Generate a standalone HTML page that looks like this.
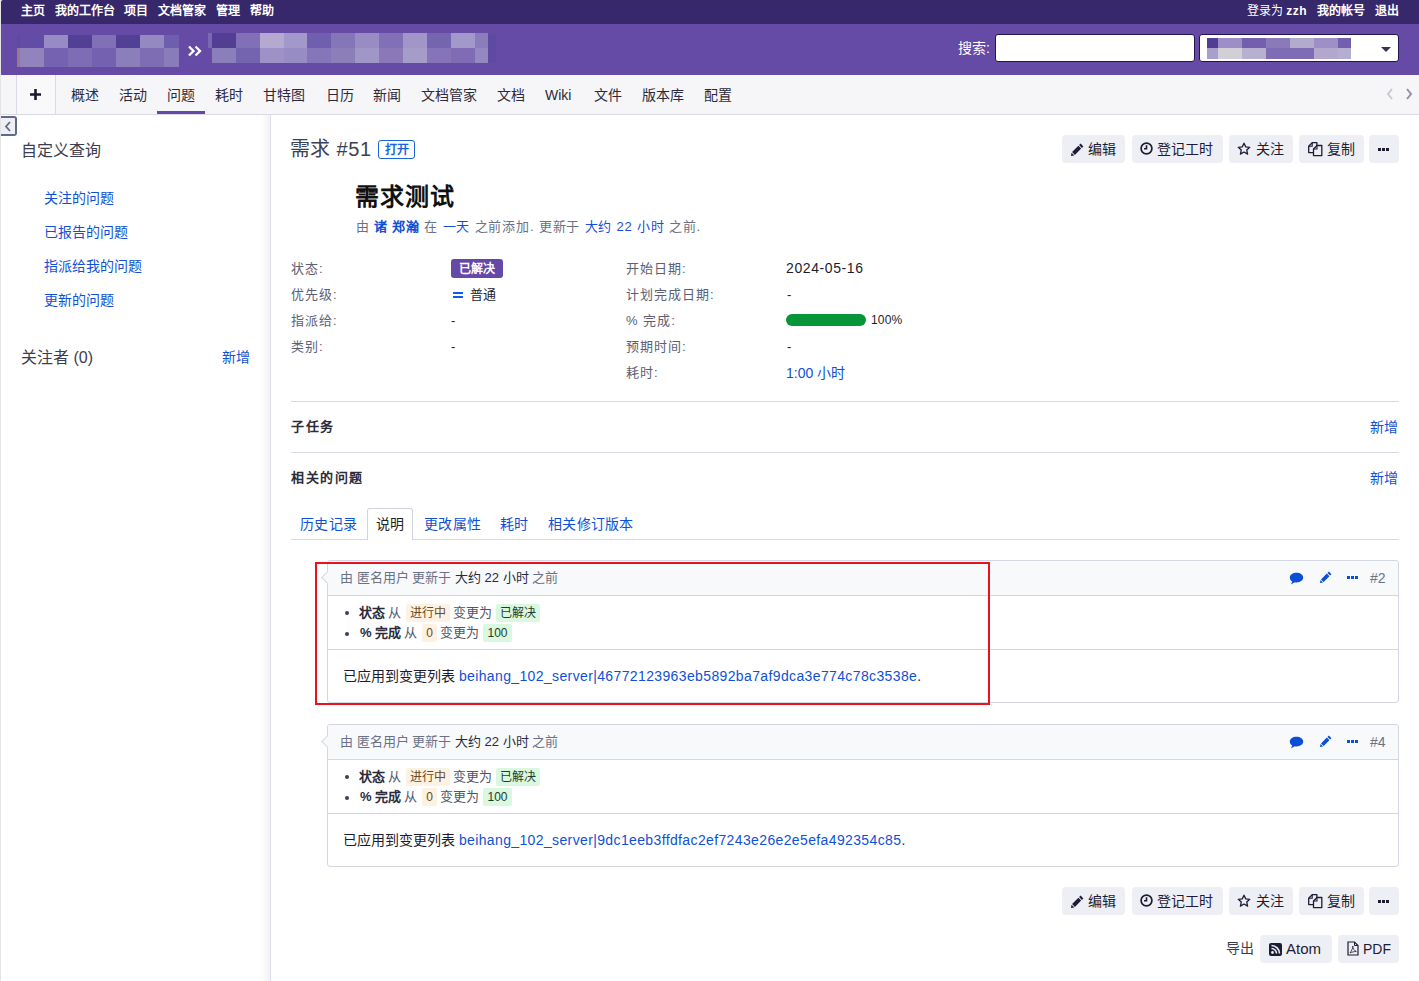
<!DOCTYPE html>
<html lang="zh-CN">
<head>
<meta charset="utf-8">
<style>
*{box-sizing:border-box;margin:0;padding:0}
html,body{width:1419px;height:981px;overflow:hidden;background:#fff}
body{font-family:"Liberation Sans",sans-serif;color:#1d1c2e;position:relative;font-size:13px}
.a{position:absolute;white-space:nowrap}
i{font-style:normal}
#leftedge{position:absolute;left:0;top:0;width:1px;height:981px;background:#e4e4e6;z-index:50}
#top{position:absolute;left:1px;top:0;width:1418px;height:24px;background:#37276b;border-top-left-radius:2px}
#top .a{color:#fff;font-size:12px;font-weight:bold;top:3px;line-height:16px}
#header{position:absolute;left:1px;top:24px;width:1418px;height:51px;background:#654aa6}
.mz{position:absolute}
.mz i{position:absolute;display:block}
#tabs{position:absolute;left:1px;top:75px;width:1418px;height:40px;background:#f6f6f9;border-bottom:1px solid #d9dae5}
#tabs .t{position:absolute;top:10px;font-size:14px;line-height:20px;color:#2b2a3d}
#sidebar{position:absolute;left:1px;top:115px;width:270px;height:866px;background:#fff;border-right:1px solid #dcdde8}
#sidebar:after{content:"";position:absolute;right:0;top:0;width:9px;height:100%;background:linear-gradient(to right,rgba(244,244,246,0),rgba(242,242,244,1))}
.lnk{color:#1150d6}
.btn{position:absolute;height:28px;background:#eeeff4;border-radius:4px;font-size:14px;line-height:28px;color:#1d1c35}
.lbl{position:absolute;color:#5b6074;font-size:13px;line-height:18px;letter-spacing:1px}
.val{position:absolute;color:#1d1c2e;font-size:13px;line-height:18px}
.hr{position:absolute;left:291px;width:1108px;height:1px;background:#d7d9e5}
.jr{position:absolute;left:327px;width:1072px;border:1px solid #d4d6e3;border-radius:3px;background:#fff}
.jh{position:absolute;left:0;top:0;right:0;height:35px;background:#f8f9fb;border-bottom:1px solid #d4d6e3;border-radius:3px 3px 0 0}
.arrow{position:absolute;left:-5px;top:11.5px;width:9px;height:9px;transform:rotate(45deg);background:#f8f9fb;border-left:1px solid #d4d6e3;border-bottom:1px solid #d4d6e3}
.gray{color:#6b7186}
.det{font-size:13px;line-height:18px;color:#2a2a3a}
.dg{color:#50556a}
.chg-o{background:#fdf1e3;border-radius:2px;text-align:center;font-size:12px;color:#6a4a22}
.chg-g{background:#daf7e0;border-radius:2px;text-align:center;font-size:12px;color:#1f3d26}
.bul{position:absolute;left:345px;width:4px;height:4px;border-radius:50%;background:#3c4054}
</style>
</head>
<body>
<div id="leftedge"></div>
<div id="top">
  <span class="a" style="left:20px">主页</span>
  <span class="a" style="left:54px">我的工作台</span>
  <span class="a" style="left:123px">项目</span>
  <span class="a" style="left:157px">文档管家</span>
  <span class="a" style="left:215px">管理</span>
  <span class="a" style="left:249px">帮助</span>
  <span class="a" style="left:1246px;font-weight:normal">登录为 <b style="letter-spacing:.5px">zzh</b></span>
  <span class="a" style="left:1316px">我的帐号</span>
  <span class="a" style="left:1374px">退出</span>
</div>
<div id="header"></div>
<div class="mz" style="left:0;top:0"><i style="left:17px;top:35px;width:3px;height:13px;background:#5e4aa5"></i><i style="left:20px;top:35px;width:24px;height:13px;background:#614ca6"></i><i style="left:44px;top:35px;width:24px;height:13px;background:#988ac4"></i><i style="left:68px;top:35px;width:24px;height:13px;background:#523f96"></i><i style="left:92px;top:35px;width:24px;height:13px;background:#8170b6"></i><i style="left:116px;top:35px;width:24px;height:13px;background:#523f96"></i><i style="left:140px;top:35px;width:24px;height:13px;background:#9589c1"></i><i style="left:164px;top:35px;width:15px;height:13px;background:#6f5eae"></i><i style="left:17px;top:48px;width:3px;height:19px;background:#9a7a8a"></i><i style="left:20px;top:48px;width:24px;height:19px;background:#9183be"></i><i style="left:44px;top:48px;width:24px;height:19px;background:#7563b1"></i><i style="left:68px;top:48px;width:24px;height:19px;background:#7e6db4"></i><i style="left:92px;top:48px;width:24px;height:19px;background:#7461b0"></i><i style="left:116px;top:48px;width:24px;height:19px;background:#8b7fbb"></i><i style="left:140px;top:48px;width:24px;height:19px;background:#7e6db4"></i><i style="left:164px;top:48px;width:15px;height:19px;background:#887cba"></i><i style="left:208px;top:33px;width:4px;height:15px;background:#7a68b2"></i><i style="left:212px;top:33px;width:24px;height:15px;background:#523f94"></i><i style="left:236px;top:33px;width:24px;height:15px;background:#8170b6"></i><i style="left:260px;top:33px;width:24px;height:15px;background:#b5a9d1"></i><i style="left:284px;top:33px;width:23px;height:15px;background:#a398ca"></i><i style="left:307px;top:33px;width:24px;height:15px;background:#705eae"></i><i style="left:331px;top:33px;width:24px;height:15px;background:#8576b8"></i><i style="left:355px;top:33px;width:24px;height:15px;background:#998cc3"></i><i style="left:379px;top:33px;width:24px;height:15px;background:#8170b6"></i><i style="left:403px;top:33px;width:24px;height:15px;background:#a296c8"></i><i style="left:427px;top:33px;width:24px;height:15px;background:#7565af"></i><i style="left:451px;top:33px;width:24px;height:15px;background:#a398ca"></i><i style="left:475px;top:33px;width:13px;height:15px;background:#8b7db9"></i><i style="left:212px;top:48px;width:24px;height:15px;background:#8a7fbb"></i><i style="left:236px;top:48px;width:24px;height:15px;background:#7463ae"></i><i style="left:260px;top:48px;width:24px;height:15px;background:#9e91c5"></i><i style="left:284px;top:48px;width:23px;height:15px;background:#978cc4"></i><i style="left:307px;top:48px;width:24px;height:15px;background:#8476b8"></i><i style="left:331px;top:48px;width:24px;height:15px;background:#8c7eb9"></i><i style="left:355px;top:48px;width:24px;height:15px;background:#a096c8"></i><i style="left:379px;top:48px;width:24px;height:15px;background:#8a78b8"></i><i style="left:403px;top:48px;width:24px;height:15px;background:#a69cca"></i><i style="left:427px;top:48px;width:24px;height:15px;background:#8575b8"></i><i style="left:451px;top:48px;width:24px;height:15px;background:#7f6cb4"></i><i style="left:475px;top:48px;width:13px;height:15px;background:#9587c0"></i><i style="left:488px;top:34px;width:8px;height:29px;background:#5e4ba1"></i></div>
<svg style="position:absolute;left:187px;top:45px" width="15" height="12" viewBox="0 0 15 12"><path d="M2 1.5l4.5 4.5L2 10.5M8.5 1.5L13 6l-4.5 4.5" fill="none" stroke="#fff" stroke-width="2.3"/></svg>
<span class="a" style="left:958px;top:38px;color:#fff;font-size:14px;line-height:20px">搜索:</span>
<div style="position:absolute;left:995px;top:34px;width:200px;height:28px;background:#fff;border:1px solid #21164a;border-radius:3px"></div>
<div style="position:absolute;left:1199px;top:34px;width:200px;height:28px;background:#fff;border:1px solid #21164a;border-radius:3px"></div>
<div class="mz" style="left:0;top:0"><i style="left:1207px;top:38px;width:11px;height:10px;background:#523d96"></i><i style="left:1218px;top:38px;width:24px;height:10px;background:#9d8fc6"></i><i style="left:1242px;top:38px;width:24px;height:10px;background:#735fae"></i><i style="left:1266px;top:38px;width:24px;height:10px;background:#8a7bb8"></i><i style="left:1290px;top:38px;width:24px;height:10px;background:#b3abcb"></i><i style="left:1314px;top:38px;width:24px;height:10px;background:#9e90c6"></i><i style="left:1338px;top:38px;width:13px;height:10px;background:#735fae"></i><i style="left:1207px;top:48px;width:11px;height:11px;background:#a99fcc"></i><i style="left:1218px;top:48px;width:24px;height:11px;background:#d2d0d6"></i><i style="left:1242px;top:48px;width:24px;height:11px;background:#b7b0d0"></i><i style="left:1266px;top:48px;width:24px;height:11px;background:#7e6cb4"></i><i style="left:1290px;top:48px;width:24px;height:11px;background:#7e6cb4"></i><i style="left:1314px;top:48px;width:24px;height:11px;background:#b2a8ce"></i><i style="left:1338px;top:48px;width:13px;height:11px;background:#b6aed0"></i></div>
<div style="position:absolute;left:1381px;top:47px;width:0;height:0;border-left:5px solid transparent;border-right:5px solid transparent;border-top:5px solid #363452"></div>
<div id="tabs">
<div style="position:absolute;left:15px;top:0;width:40px;height:39px;background:#f9f9fb;border-left:1px solid #d9dae5;border-right:1px solid #d9dae5"></div>
<svg style="position:absolute;left:28px;top:13px" width="13" height="13" viewBox="0 0 13 13"><path d="M6.5 1v11M1 6.5h11" stroke="#1a1a2e" stroke-width="2.6"/></svg>
<span class="t" style="left:70px">概述</span>
<span class="t" style="left:118px">活动</span>
<span class="t" style="left:166px">问题</span>
<span class="t" style="left:214px">耗时</span>
<span class="t" style="left:262px">甘特图</span>
<span class="t" style="left:325px">日历</span>
<span class="t" style="left:372px">新闻</span>
<span class="t" style="left:420px">文档管家</span>
<span class="t" style="left:496px">文档</span>
<span class="t" style="left:544px">Wiki</span>
<span class="t" style="left:593px">文件</span>
<span class="t" style="left:641px">版本库</span>
<span class="t" style="left:703px">配置</span>
<div style="position:absolute;left:156px;top:36px;width:48px;height:3px;background:#6549a6"></div>
<svg style="position:absolute;left:1384px;top:12px" width="10" height="14" viewBox="0 0 10 14"><path d="M7 2L3 7l4 5" fill="none" stroke="#c6c9d6" stroke-width="2"/></svg>
<svg style="position:absolute;left:1403px;top:12px" width="10" height="14" viewBox="0 0 10 14"><path d="M3 2l4 5-4 5" fill="none" stroke="#8d92a8" stroke-width="2"/></svg>
</div>
<div id="sidebar">
  <div style="position:absolute;left:0;top:1px;width:16px;height:20px;background:#eeeff4;border:2px solid #5f6a89;border-left:none;border-radius:0 3px 3px 0"></div>
  <svg style="position:absolute;left:3px;top:6px" width="8" height="11" viewBox="0 0 8 11"><path d="M6 1L2 5.5 6 10" fill="none" stroke="#5f6a89" stroke-width="1.8"/></svg>
  <span class="a" style="left:20px;top:25px;font-size:16px;line-height:22px;color:#3b3e50">自定义查询</span>
  <span class="a lnk" style="left:43px;top:73px;font-size:14px;line-height:20px">关注的问题</span>
  <span class="a lnk" style="left:43px;top:107px;font-size:14px;line-height:20px">已报告的问题</span>
  <span class="a lnk" style="left:43px;top:141px;font-size:14px;line-height:20px">指派给我的问题</span>
  <span class="a lnk" style="left:43px;top:175px;font-size:14px;line-height:20px">更新的问题</span>
  <span class="a" style="left:20px;top:232px;font-size:16px;line-height:22px;color:#3b3e50">关注者 (0)</span>
  <span class="a lnk" style="left:221px;top:232px;font-size:14px;line-height:20px">新增</span>
</div>

<span class="a" style="left:290px;top:136px;font-size:20px;line-height:26px;color:#3e4153">需求 <span style="margin-left:1px;letter-spacing:.6px">#51</span></span>
<span class="a" style="left:378px;top:140px;width:37px;height:19px;border:1px solid #1a62e0;border-radius:3px;color:#1a62e0;font-size:12px;font-weight:bold;line-height:18px;text-align:center">打开</span>

<div class="btn" style="left:1062px;top:135px;width:63px"><span class="a" style="left:9px;top:8px;line-height:0"><svg width="13" height="13" viewBox="0 0 13 13"><path d="M9.6 0.6l2.8 2.8-1.5 1.5-2.8-2.8z M7.4 2.8l2.8 2.8-6.3 6.3-2.8-2.8z M0.5 9.7l2.8 2.8-3.3 0.5z" fill="#1d1c35"/></svg></span><span class="a" style="left:26px;top:0">编辑</span></div>
<div class="btn" style="left:1132px;top:135px;width:91px"><span class="a" style="left:8px;top:7px;line-height:0"><svg width="13" height="13" viewBox="0 0 13 13"><circle cx="6.5" cy="6.5" r="5.4" fill="none" stroke="#1d1c35" stroke-width="1.7"/><path d="M6.5 3.2v3.6H4" fill="none" stroke="#1d1c35" stroke-width="1.6"/></svg></span><span class="a" style="left:25px;top:0">登记工时</span></div>
<div class="btn" style="left:1229px;top:135px;width:64px"><span class="a" style="left:8px;top:7px;line-height:0"><svg width="14" height="14" viewBox="0 0 14 14"><path d="M7 1.2l1.75 3.7 4 .45-3 2.75.85 4-3.6-2.05-3.6 2.05.85-4-3-2.75 4-.45z" fill="none" stroke="#1d1c35" stroke-width="1.3" stroke-linejoin="round"/></svg></span><span class="a" style="left:27px;top:0">关注</span></div>
<div class="btn" style="left:1299px;top:135px;width:65px"><span class="a" style="left:9px;top:7px;line-height:0"><svg width="15" height="15" viewBox="0 0 15 15"><path d="M5.2 10.6H0.7V4.2L4.2 0.7H8.9V3.4" fill="none" stroke="#1d1c35" stroke-width="1.3" stroke-linejoin="round"/><path d="M4.2 0.7V4.2H0.7" fill="none" stroke="#1d1c35" stroke-width="1.1"/><path d="M5.5 7L9 3.5H13.8V13.6H5.5Z" fill="none" stroke="#1d1c35" stroke-width="1.3" stroke-linejoin="round"/><path d="M9 3.5V7H5.5" fill="none" stroke="#1d1c35" stroke-width="1.1"/></svg></span><span class="a" style="left:28px;top:0">复制</span></div>
<div class="btn" style="left:1369px;top:135px;width:30px"><span class="a" style="left:9px;top:12px;line-height:0"><svg width="11" height="4" viewBox="0 0 11 4"><rect x="0" y="0" width="3" height="3" fill="#1d1c35"/><rect x="4" y="0" width="3" height="3" fill="#1d1c35"/><rect x="8" y="0" width="3" height="3" fill="#1d1c35"/></svg></span></div>

<span class="a" style="left:355px;top:181px;font-size:24px;font-weight:bold;line-height:32px;color:#111;letter-spacing:1px">需求测试</span>
<span class="a gray" style="left:356px;top:218px;font-size:13px;line-height:18px;letter-spacing:.8px">由 <b class="lnk">诸 郑瀚</b> 在 <span class="lnk">一天</span> 之前添加. 更新于 <span class="lnk">大约 22 小时</span> 之前.</span>

<span class="lbl" style="left:291px;top:260px">状态:</span>
<span class="lbl" style="left:291px;top:286px">优先级:</span>
<span class="lbl" style="left:291px;top:312px">指派给:</span>
<span class="lbl" style="left:291px;top:338px">类别:</span>
<span class="a" style="left:451px;top:259px;width:52px;height:19px;background:#6549a6;border-radius:3px;color:#fff;font-size:12px;font-weight:bold;line-height:20px;text-align:center">已解决</span>
<span class="a" style="left:453px;top:292px;width:10px;height:2px;background:#0b5cf5"></span>
<span class="a" style="left:453px;top:296px;width:10px;height:2px;background:#0b5cf5"></span>
<span class="val" style="left:470px;top:286px">普通</span>
<span class="val" style="left:451px;top:312px">-</span>
<span class="val" style="left:451px;top:338px">-</span>

<span class="lbl" style="left:626px;top:260px">开始日期:</span>
<span class="lbl" style="left:626px;top:286px">计划完成日期:</span>
<span class="lbl" style="left:626px;top:312px">% 完成:</span>
<span class="lbl" style="left:626px;top:338px">预期时间:</span>
<span class="lbl" style="left:626px;top:364px">耗时:</span>
<span class="val" style="left:786px;top:259px;font-size:14px;letter-spacing:.6px">2024-05-16</span>
<span class="val" style="left:787px;top:286px">-</span>
<span class="a" style="left:786px;top:314px;width:80px;height:12px;background:#07953a;border-radius:6px"></span>
<span class="val" style="left:871px;top:311px;font-size:12px;letter-spacing:.2px">100%</span>
<span class="val" style="left:787px;top:338px">-</span>
<span class="val" style="left:786px;top:364px;font-size:14px;color:#1150d6">1:00 小时</span>

<div class="hr" style="top:401px"></div>
<span class="a" style="left:291px;top:418px;font-size:13px;font-weight:bold;line-height:18px;color:#2b2c3c;letter-spacing:1.5px">子任务</span>
<span class="a lnk" style="left:1370px;top:417px;font-size:14px;line-height:20px">新增</span>
<div class="hr" style="top:452px"></div>
<span class="a" style="left:291px;top:469px;font-size:13px;font-weight:bold;line-height:18px;color:#2b2c3c;letter-spacing:1.5px">相关的问题</span>
<span class="a lnk" style="left:1370px;top:468px;font-size:14px;line-height:20px">新增</span>

<div class="hr" style="top:539px"></div>
<div style="position:absolute;left:367px;top:508px;width:46px;height:32px;background:#fff;border:1px solid #d0d2de;border-bottom:none;border-radius:3px 3px 0 0"></div>
<span class="a lnk" style="left:300px;top:514px;font-size:14px;line-height:20px;letter-spacing:.4px">历史记录</span>
<span class="a" style="left:376px;top:514px;font-size:14px;line-height:20px;color:#222">说明</span>
<span class="a lnk" style="left:424px;top:514px;font-size:14px;line-height:20px;letter-spacing:.3px">更改属性</span>
<span class="a lnk" style="left:500px;top:514px;font-size:14px;line-height:20px">耗时</span>
<span class="a lnk" style="left:548px;top:514px;font-size:14px;line-height:20px;letter-spacing:.3px">相关修订版本</span>

<div class="jr" style="top:560px;height:143px"><div class="jh"></div><div class="arrow"></div><div style="position:absolute;left:0;right:0;top:88px;height:1px;background:#d4d6e3"></div></div>
<span class="a" style="left:340px;top:569px;font-size:13px;line-height:18px"><span class="gray">由 匿名用户 更新于</span> <span style="color:#2a2a3a">大约 22 小时</span> <span class="gray">之前</span></span>
<span class="a" style="left:1289px;top:572px;line-height:0"><svg width="15" height="13" viewBox="0 0 15 13"><path d="M7.5 0.8C11.3 0.8 14.2 2.9 14.2 5.6 14.2 8.3 11.3 10.4 7.5 10.4 6.8 10.4 6.2 10.3 5.6 10.2L2 12.4 3.2 9.5C1.7 8.6 0.8 7.2 0.8 5.6 0.8 2.9 3.7 0.8 7.5 0.8z" fill="#0a4fd4"/></svg></span>
<span class="a" style="left:1320px;top:571px;line-height:0"><svg width="12" height="12" viewBox="0 0 13 13"><path d="M9.6 0.6l2.8 2.8-1.5 1.5-2.8-2.8z M7.4 2.8l2.8 2.8-6.3 6.3-2.8-2.8z M0.5 9.7l2.8 2.8-3.3 0.5z" fill="#0a4fd4"/></svg></span>
<span class="a" style="left:1347px;top:576px;line-height:0"><svg width="11" height="4" viewBox="0 0 11 4"><rect x="0" y="0" width="3" height="3" fill="#0a4fd4"/><rect x="4" y="0" width="3" height="3" fill="#0a4fd4"/><rect x="8" y="0" width="3" height="3" fill="#0a4fd4"/></svg></span>
<span class="a gray" style="left:1370px;top:568px;font-size:14px;line-height:20px">#2</span>
<i class="bul" style="top:611px"></i><i class="bul" style="top:632px"></i>
<span class="a det" style="left:359px;top:604px"><b>状态</b></span>
<span class="a det dg" style="left:388px;top:604px">从</span>
<span class="a det chg-o" style="left:406px;top:604px;width:44px">进行中</span>
<span class="a det dg" style="left:453px;top:604px">变更为</span>
<span class="a det chg-g" style="left:496px;top:604px;width:44px">已解决</span>
<span class="a det" style="left:360px;top:624px"><b>% 完成</b></span>
<span class="a det dg" style="left:404px;top:624px">从</span>
<span class="a det chg-o" style="left:422px;top:624px;width:15px">0</span>
<span class="a det dg" style="left:440px;top:624px">变更为</span>
<span class="a det chg-g" style="left:483px;top:624px;width:29px">100</span>
<span class="a" style="left:343px;top:666px;font-size:14px;line-height:20px;color:#1d1c2e">已应用到变更列表 <span class="lnk" style="letter-spacing:.37px">beihang_102_server|46772123963eb5892ba7af9dca3e774c78c3538e</span>.</span>
<div class="jr" style="top:724px;height:143px"><div class="jh"></div><div class="arrow"></div><div style="position:absolute;left:0;right:0;top:88px;height:1px;background:#d4d6e3"></div></div>
<span class="a" style="left:340px;top:733px;font-size:13px;line-height:18px"><span class="gray">由 匿名用户 更新于</span> <span style="color:#2a2a3a">大约 22 小时</span> <span class="gray">之前</span></span>
<span class="a" style="left:1289px;top:736px;line-height:0"><svg width="15" height="13" viewBox="0 0 15 13"><path d="M7.5 0.8C11.3 0.8 14.2 2.9 14.2 5.6 14.2 8.3 11.3 10.4 7.5 10.4 6.8 10.4 6.2 10.3 5.6 10.2L2 12.4 3.2 9.5C1.7 8.6 0.8 7.2 0.8 5.6 0.8 2.9 3.7 0.8 7.5 0.8z" fill="#0a4fd4"/></svg></span>
<span class="a" style="left:1320px;top:735px;line-height:0"><svg width="12" height="12" viewBox="0 0 13 13"><path d="M9.6 0.6l2.8 2.8-1.5 1.5-2.8-2.8z M7.4 2.8l2.8 2.8-6.3 6.3-2.8-2.8z M0.5 9.7l2.8 2.8-3.3 0.5z" fill="#0a4fd4"/></svg></span>
<span class="a" style="left:1347px;top:740px;line-height:0"><svg width="11" height="4" viewBox="0 0 11 4"><rect x="0" y="0" width="3" height="3" fill="#0a4fd4"/><rect x="4" y="0" width="3" height="3" fill="#0a4fd4"/><rect x="8" y="0" width="3" height="3" fill="#0a4fd4"/></svg></span>
<span class="a gray" style="left:1370px;top:732px;font-size:14px;line-height:20px">#4</span>
<i class="bul" style="top:775px"></i><i class="bul" style="top:796px"></i>
<span class="a det" style="left:359px;top:768px"><b>状态</b></span>
<span class="a det dg" style="left:388px;top:768px">从</span>
<span class="a det chg-o" style="left:406px;top:768px;width:44px">进行中</span>
<span class="a det dg" style="left:453px;top:768px">变更为</span>
<span class="a det chg-g" style="left:496px;top:768px;width:44px">已解决</span>
<span class="a det" style="left:360px;top:788px"><b>% 完成</b></span>
<span class="a det dg" style="left:404px;top:788px">从</span>
<span class="a det chg-o" style="left:422px;top:788px;width:15px">0</span>
<span class="a det dg" style="left:440px;top:788px">变更为</span>
<span class="a det chg-g" style="left:483px;top:788px;width:29px">100</span>
<span class="a" style="left:343px;top:830px;font-size:14px;line-height:20px;color:#1d1c2e">已应用到变更列表 <span class="lnk" style="letter-spacing:.37px">beihang_102_server|9dc1eeb3ffdfac2ef7243e26e2e5efa492354c85</span>.</span>
<div style="position:absolute;left:315px;top:562px;width:675px;height:143px;border:2px solid #e5131d"></div>

<div class="btn" style="left:1062px;top:887px;width:63px"><span class="a" style="left:9px;top:8px;line-height:0"><svg width="13" height="13" viewBox="0 0 13 13"><path d="M9.6 0.6l2.8 2.8-1.5 1.5-2.8-2.8z M7.4 2.8l2.8 2.8-6.3 6.3-2.8-2.8z M0.5 9.7l2.8 2.8-3.3 0.5z" fill="#1d1c35"/></svg></span><span class="a" style="left:26px;top:0">编辑</span></div>
<div class="btn" style="left:1132px;top:887px;width:91px"><span class="a" style="left:8px;top:7px;line-height:0"><svg width="13" height="13" viewBox="0 0 13 13"><circle cx="6.5" cy="6.5" r="5.4" fill="none" stroke="#1d1c35" stroke-width="1.7"/><path d="M6.5 3.2v3.6H4" fill="none" stroke="#1d1c35" stroke-width="1.6"/></svg></span><span class="a" style="left:25px;top:0">登记工时</span></div>
<div class="btn" style="left:1229px;top:887px;width:64px"><span class="a" style="left:8px;top:7px;line-height:0"><svg width="14" height="14" viewBox="0 0 14 14"><path d="M7 1.2l1.75 3.7 4 .45-3 2.75.85 4-3.6-2.05-3.6 2.05.85-4-3-2.75 4-.45z" fill="none" stroke="#1d1c35" stroke-width="1.3" stroke-linejoin="round"/></svg></span><span class="a" style="left:27px;top:0">关注</span></div>
<div class="btn" style="left:1299px;top:887px;width:65px"><span class="a" style="left:9px;top:7px;line-height:0"><svg width="15" height="15" viewBox="0 0 15 15"><path d="M5.2 10.6H0.7V4.2L4.2 0.7H8.9V3.4" fill="none" stroke="#1d1c35" stroke-width="1.3" stroke-linejoin="round"/><path d="M4.2 0.7V4.2H0.7" fill="none" stroke="#1d1c35" stroke-width="1.1"/><path d="M5.5 7L9 3.5H13.8V13.6H5.5Z" fill="none" stroke="#1d1c35" stroke-width="1.3" stroke-linejoin="round"/><path d="M9 3.5V7H5.5" fill="none" stroke="#1d1c35" stroke-width="1.1"/></svg></span><span class="a" style="left:28px;top:0">复制</span></div>
<div class="btn" style="left:1369px;top:887px;width:30px"><span class="a" style="left:9px;top:12px;line-height:0"><svg width="11" height="4" viewBox="0 0 11 4"><rect x="0" y="0" width="3" height="3" fill="#1d1c35"/><rect x="4" y="0" width="3" height="3" fill="#1d1c35"/><rect x="8" y="0" width="3" height="3" fill="#1d1c35"/></svg></span></div>


<span class="a" style="left:1226px;top:938px;font-size:14px;line-height:20px;color:#3b3e50">导出</span>
<div class="btn" style="left:1260px;top:935px;width:72px"><span class="a" style="left:9px;top:8px;line-height:0"><svg width="13" height="13" viewBox="0 0 13 13"><rect x="0" y="0" width="13" height="13" rx="2" fill="#1d1c35"/><circle cx="3.5" cy="9.5" r="1.4" fill="#eeeff4"/><path d="M2.5 5.5a5 5 0 0 1 5 5M2.5 2.5a8 8 0 0 1 8 8" fill="none" stroke="#eeeff4" stroke-width="1.6"/></svg></span><span class="a" style="left:26px;top:0;font-size:15px">Atom</span></div>
<div class="btn" style="left:1338px;top:935px;width:61px"><span class="a" style="left:9px;top:6px;line-height:0"><svg width="12" height="15" viewBox="0 0 12 15"><path d="M1 1h6.5L11 4.5V14H1z" fill="none" stroke="#1d1c35" stroke-width="1.2"/><path d="M7.5 1v3.5H11" fill="none" stroke="#1d1c35" stroke-width="1"/><path d="M3 12c1.5-2 3-5 2.8-7-.3 2 1.5 5 3.5 5.5-2 0-4.5.5-6.3 1.5z" fill="none" stroke="#1d1c35" stroke-width=".8"/></svg></span><span class="a" style="left:25px;top:0;font-size:14px">PDF</span></div>

</body>
</html>
